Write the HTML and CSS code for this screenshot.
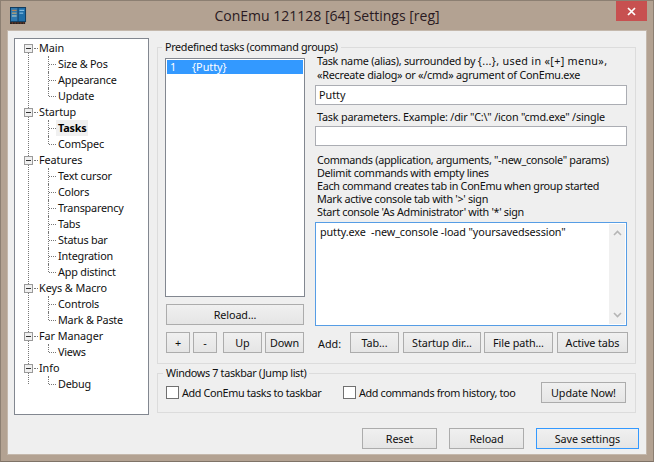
FILE: index.html
```html
<!DOCTYPE html>
<html lang="en">
<head>
<meta charset="utf-8">
<title>ConEmu Settings</title>
<link rel="stylesheet" href="styles.css">
</head>
<body>
<div class="window">
  <header class="titlebar">
    <svg class="app-icon" width="17" height="17" viewBox="0 0 18 18">
      <rect x="0" y="0" width="17" height="16" fill="#123a5c"/>
      <rect x="1" y="1" width="7" height="14" fill="#2f78ae"/>
      <rect x="9" y="1" width="7" height="14" fill="#1f6ea8"/>
      <rect x="2" y="3" width="5" height="1" fill="#e08a3c"/>
      <rect x="2" y="6" width="5" height="1" fill="#e8b060"/>
      <rect x="2" y="9" width="5" height="1" fill="#d9d9c0"/>
      <rect x="10" y="3" width="5" height="1" fill="#9ed0ee"/>
      <rect x="10" y="6" width="4" height="1" fill="#9ed0ee"/>
      <rect x="0" y="16" width="16" height="2" fill="#23201c"/>
      <path d="M2 17h1M5 17h1M8 17h1M11 17h1M14 17h1" stroke="#b0452e" stroke-width="1"/>
    </svg>
    <div class="title">ConEmu 121128 [64] Settings [reg]</div>
    <div class="close"><svg width="9" height="9" viewBox="0 0 9 9"><path d="M1 1l7 7M8 1l-7 7" stroke="#fff" stroke-width="1.7"/></svg></div>
  </header>
  <div class="panel">
    <div class="main">
      <nav class="tree">
        <div class="group">
          <div class="node"><span class="box"></span><span class="dots"></span><span class="lab">Main</span></div>
          <div class="leaf"><span class="lab">Size &amp; Pos</span></div>
          <div class="leaf"><span class="lab">Appearance</span></div>
          <div class="leaf"><span class="lab">Update</span></div>
        </div>
        <div class="group">
          <div class="node"><span class="box"></span><span class="dots"></span><span class="lab">Startup</span></div>
          <div class="leaf"><span class="lab selected">Tasks</span></div>
          <div class="leaf"><span class="lab">ComSpec</span></div>
        </div>
        <div class="group">
          <div class="node"><span class="box"></span><span class="dots"></span><span class="lab">Features</span></div>
          <div class="leaf"><span class="lab">Text cursor</span></div>
          <div class="leaf"><span class="lab">Colors</span></div>
          <div class="leaf"><span class="lab">Transparency</span></div>
          <div class="leaf"><span class="lab">Tabs</span></div>
          <div class="leaf"><span class="lab">Status bar</span></div>
          <div class="leaf"><span class="lab">Integration</span></div>
          <div class="leaf"><span class="lab">App distinct</span></div>
        </div>
        <div class="group">
          <div class="node"><span class="box"></span><span class="dots"></span><span class="lab">Keys &amp; Macro</span></div>
          <div class="leaf"><span class="lab">Controls</span></div>
          <div class="leaf"><span class="lab">Mark &amp; Paste</span></div>
        </div>
        <div class="group">
          <div class="node"><span class="box"></span><span class="dots"></span><span class="lab">Far Manager</span></div>
          <div class="leaf"><span class="lab">Views</span></div>
        </div>
        <div class="group">
          <div class="node"><span class="box"></span><span class="dots"></span><span class="lab">Info</span></div>
          <div class="leaf"><span class="lab">Debug</span></div>
        </div>
      </nav>
      <div class="side">
        <fieldset class="gbox tasks">
          <legend>Predefined tasks (command groups)</legend>
          <div class="tasks-grid">
            <div class="left-col">
              <div class="listbox"><div class="list-item"><span class="idx">1</span><span>{Putty}</span></div></div>
              <button class="btn reload-list">Reload...</button>
              <div class="list-btns">
                <button class="btn b-plus">+</button>
                <button class="btn b-minus">-</button>
                <button class="btn b-up">Up</button>
                <button class="btn b-down">Down</button>
              </div>
            </div>
            <div class="right-col">
              <div class="lbl l-name">Task name (alias), surrounded by <span class="wide">{...}, used in «[+] menu»,</span><br>«Recreate dialog» or «/cmd» agrument of ConEmu.exe</div>
              <div class="field">Putty</div>
              <div class="lbl l-params">Task parameters. Example: /dir "C:\" /icon "cmd.exe" /single</div>
              <div class="field"></div>
              <div class="lbl l-cmds">Commands (application, arguments, "-new_console" params)<br>Delimit commands with empty lines<br>Each command creates tab in ConEmu when group started<br>Mark active console tab with '&gt;' sign<br>Start console 'As Administrator' with '*' sign</div>
              <div class="memo">
                <div class="memo-text">putty.exe&nbsp; -new_console -load "yoursavedsession"</div>
                <div class="scroll">
                  <svg width="9" height="6" viewBox="0 0 9 6"><path d="M1 5l3.500-3.500L8 5" fill="none" stroke="#b5b5b5" stroke-width="1.600"/></svg>
                  <svg width="9" height="6" viewBox="0 0 9 6"><path d="M1 1l3.500 3.500L8 1" fill="none" stroke="#b5b5b5" stroke-width="1.600"/></svg>
                </div>
              </div>
              <div class="add-row">
                <span class="add-lbl">Add:</span>
                <button class="btn b-tab">Tab...</button>
                <button class="btn b-dir">Startup dir...</button>
                <button class="btn b-path">File path...</button>
                <button class="btn b-active">Active tabs</button>
              </div>
            </div>
          </div>
        </fieldset>
        <fieldset class="gbox jump">
          <legend>Windows 7 taskbar (Jump list)</legend>
          <div class="jump-row">
            <label class="check c-one"><span class="cb"></span>Add ConEmu tasks to taskbar</label>
            <label class="check c-two"><span class="cb"></span>Add commands from history, too</label>
            <button class="btn b-update">Update Now!</button>
          </div>
        </fieldset>
      </div>
    </div>
    <footer class="bottom">
      <button class="btn b-reset">Reset</button>
      <button class="btn b-reload">Reload</button>
      <button class="btn b-save">Save settings</button>
    </footer>
  </div>
</div>
</body>
</html>
```
FILE: styles.css
```css
* { box-sizing: border-box; }
html, body { margin: 0; padding: 0; }
body { width: 654px; height: 462px; overflow: hidden; font-family: "Noto Sans", Tahoma, sans-serif; font-size: 10.8px; color: #101010; }
.window { width: 654px; height: 462px; background: #b3a292; border: 1px solid #8c7f72; border-bottom-color: #7f7367; display: flex; flex-direction: column; padding: 0 7px 7px; }
.titlebar { height: 30px; display: flex; position: relative; flex: none; }
.app-icon { position: absolute; left: 2px; top: 6px; }
.title { flex: 1; text-align: center; font-family: "Open Sans", sans-serif; font-size: 14px; line-height: 29px; color: #2a1a22; }
.close { position: absolute; right: -1px; top: 0; width: 31px; height: 20px; background: #c75050; display: flex; align-items: center; justify-content: center; }
.panel { flex: 1; background: #efefef; padding: 7px 7px 5px 6px; display: flex; flex-direction: column; box-shadow: 0 0 0 1px #c4b8ac; }
.main { display: flex; gap: 8px; flex: 1; }
.tree { width: 135px; height: 377px; background: #fff; border: 1px solid #828790; padding-top: 1px; }
.group { position: relative; }
.group::before { content: ""; position: absolute; left: 13px; top: 8px; bottom: -8px; border-left: 1px dotted #777; }
.group:last-child::before { bottom: auto; height: 16px; }
.node, .leaf { height: 16px; display: flex; align-items: center; position: relative; }
.node { padding-left: 9px; }
.box { width: 9px; height: 9px; background: #f0f0f0; border: 1px solid #9a9a9a; position: relative; z-index: 1; margin-right: 1px; flex: none; display: flex; align-items: center; justify-content: center; }
.box::after { content: ""; width: 5px; height: 1px; background: #333; }
.dots { width: 4px; border-top: 1px dotted #777; flex: none; }
.node .lab { padding-left: 1px; letter-spacing: -0.05px; }
.leaf { padding-left: 41px; letter-spacing: -0.2px; }
.leaf::before { content: ""; position: absolute; left: 33px; top: 0; bottom: 0; border-left: 1px dotted #777; }
.leaf:last-child::before { bottom: 8px; }
.leaf::after { content: ""; position: absolute; left: 34px; top: 8px; width: 7px; border-top: 1px dotted #777; }
.lab { line-height: 16px; padding: 0 2px; white-space: nowrap; }
.selected { font-weight: 700; background: #f0f0f0; color: #000; }
.side { width: 479px; display: flex; flex-direction: column; gap: 0; }
.gbox { margin: 0; padding: 0; border: 1px solid #dcdcdc; min-width: 0; }
.gbox legend { padding: 0 3px; margin-left: -3px; line-height: 14px; letter-spacing: -0.33px; }
.tasks { margin-top: 2px; height: 324px; padding: 0 8px 0 7px; }
.tasks-grid { display: flex; gap: 10px; }
.left-col { width: 140px; display: flex; flex-direction: column; padding-top: 4px; }
.listbox { height: 239px; background: #fff; border: 1px solid #828790; padding: 1px; }
.list-item { height: 14px; background: #3399ff; color: #fff; display: flex; line-height: 14px; padding-left: 3px; }
.idx { width: 22px; }
.btn { font: inherit; letter-spacing: -0.1px; color: #101010; background: linear-gradient(#f0f0f0, #e5e5e5); border: 1px solid #acacac; height: 21px; padding: 0; border-radius: 0; }
.reload-list { margin: 7px 1px 0; height: 21px; }
.list-btns { display: flex; margin: 7px 1px 0; }
.b-plus, .b-minus { width: 24px; }
.b-minus { margin-left: 3px; }
.b-up { width: 39px; margin-left: 6px; }
.b-down { width: 39px; margin-left: 3px; }
.right-col { width: 313px; display: flex; flex-direction: column; }
.lbl { padding-left: 2px; line-height: 14px; white-space: nowrap; }
.field { height: 20px; width: 312px; background: #fff; border: 1px solid #abadb3; padding-left: 3px; line-height: 18px; }
.l-name { height: 28px; margin-bottom: 3px; letter-spacing: -0.25px; }
.wide { letter-spacing: 0.3px; }
.l-params { margin-top: 5px; height: 14px; margin-bottom: 2px; letter-spacing: -0.2px; }
.l-cmds { margin-top: 7px; line-height: 13px; height: 65px; margin-bottom: 4px; letter-spacing: -0.3px; }
.memo { width: 312px; height: 104px; background: #fff; border: 1px solid #569de5; display: flex; justify-content: space-between; padding: 1px; }
.memo-text { padding: 1px 3px; line-height: 14px; white-space: pre; letter-spacing: -0.1px; }
.scroll { width: 16px; background: #f0f0f0; display: flex; flex-direction: column; justify-content: space-between; align-items: center; padding: 6px 0; }
.add-row { display: flex; align-items: center; margin-top: 6px; }
.add-lbl { width: 35px; padding-left: 3px; padding-top: 1px; }
.b-tab { width: 49px; }
.b-dir { width: 78px; margin-left: 4px; }
.b-path { width: 69px; margin-left: 3px; }
.b-active { width: 71px; margin-left: 4px; }
.jump { margin-top: 2px; height: 47px; padding: 0 9px 0 8px; }
.jump-row { display: flex; align-items: center; height: 23px; padding-top: 1px; }
.check { display: flex; align-items: center; white-space: nowrap; letter-spacing: -0.35px; }
.cb { width: 13px; height: 13px; background: #fff; border: 1px solid #707070; margin-right: 3px; flex: none; }
.c-one { width: 177px; }
.c-two { width: 198px; }
.b-update { width: 85px; }
.bottom { display: flex; justify-content: flex-end; margin-top: 7px; flex: none; }
.b-reset, .b-reload { width: 75px; margin-right: 12px; }
.b-save { width: 103px; border-color: #3399ff; }
```
